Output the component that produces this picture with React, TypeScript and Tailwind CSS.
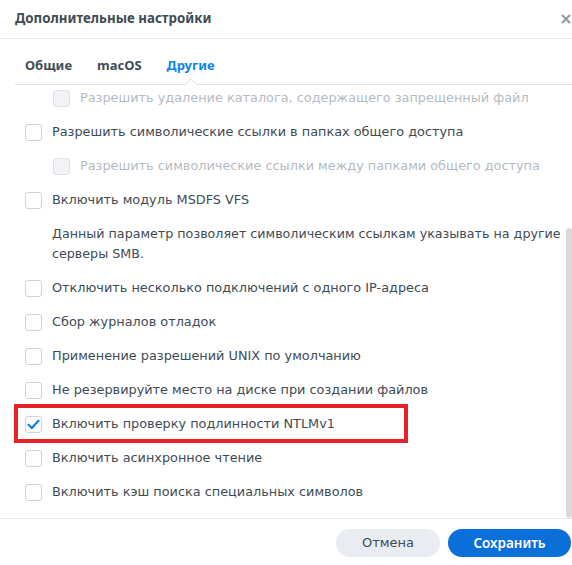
import React from "react";

type Row = {
  label: string;
  indent?: boolean;
  disabled?: boolean;
  checked?: boolean;
};

const rowsTop: Row[] = [
  { label: "Разрешить удаление каталога, содержащего запрещенный файл", indent: true, disabled: true },
  { label: "Разрешить символические ссылки в папках общего доступа" },
  { label: "Разрешить символические ссылки между папками общего доступа", indent: true, disabled: true },
  { label: "Включить модуль MSDFS VFS" },
];

const rowsBottom: Row[] = [
  { label: "Отключить несколько подключений с одного IP-адреса" },
  { label: "Сбор журналов отладок" },
  { label: "Применение разрешений UNIX по умолчанию" },
  { label: "Не резервируйте место на диске при создании файлов" },
  { label: "Включить проверку подлинности NTLMv1", checked: true },
  { label: "Включить асинхронное чтение" },
  { label: "Включить кэш поиска специальных символов" },
];

const boldFont = { fontFamily: '"Noto Sans", "Open Sans", sans-serif' };

function Checkbox({ disabled, checked }: { disabled?: boolean; checked?: boolean }) {
  return (
    <span
      className={
        disabled
          ? "flex h-[17px] w-[17px] shrink-0 items-center justify-center rounded-[3px] border border-[#dde2e8] bg-[#f1f3f6]"
          : "flex h-[17px] w-[17px] shrink-0 items-center justify-center rounded-[3px] border border-[#cbd3dc] bg-white"
      }
    >
      {checked && (
        <svg width="13" height="11" viewBox="0 0 13 11" fill="none">
          <path d="M1.5 5.8 L4.8 9 L11.5 1.8" stroke="#0a7fe6" strokeWidth="2.2" strokeLinecap="round" strokeLinejoin="round" />
        </svg>
      )}
    </span>
  );
}

function OptionRow({ row }: { row: Row }) {
  return (
    <div className={`flex h-[34px] items-center ${row.indent ? "pl-[53px]" : "pl-[25px]"}`}>
      <Checkbox disabled={row.disabled} checked={row.checked} />
      <span
        className={`ml-[10px] whitespace-nowrap text-[12.85px] ${row.disabled ? "text-[#b4bbc3]" : "text-[#414b55]"}`}
      >
        {row.label}
      </span>
    </div>
  );
}

export default function App() {
  return (
    <div
      className="relative flex h-[565px] w-[572px] flex-col overflow-hidden bg-white"
      style={{ fontFamily: '"DejaVu Sans", Verdana, sans-serif' }}
    >
      {/* header */}
      <div className="flex h-[39px] shrink-0 items-center justify-between border-b border-[#e5e9ee] pl-[15px] pr-[1px]">
        <span className="text-[13.3px] font-bold text-[#414b55]" style={boldFont}>
          Дополнительные настройки
        </span>
        <svg width="10" height="10" viewBox="0 0 10 10">
          <path d="M1 1 L9 9 M9 1 L1 9" stroke="#8f98a1" strokeWidth="2" />
        </svg>
      </div>

      {/* tabs */}
      <div
        className="ml-[15px] flex h-[46px] shrink-0 items-center gap-[25px] border-b border-[#dfe4ea] pl-[10px] pt-[8px]"
        style={boldFont}
      >
        <span className="text-[13px] font-bold text-[#414b55]">Общие</span>
        <span className="text-[13px] font-bold text-[#414b55]">macOS</span>
        <span className="relative text-[13px] font-bold text-[#0a86e6]">
          Другие
          <span className="absolute left-1/2 top-[24px] h-[9px] w-[9px] -translate-x-1/2 rotate-45 border-l border-t border-[#dfe4ea] bg-white" />
        </span>
      </div>

      {/* scrolled content */}
      <div className="relative flex-1 overflow-hidden">
        <div className="-mt-[4px]">
          {rowsTop.map((r) => (
            <OptionRow key={r.label} row={r} />
          ))}
          <div className="whitespace-nowrap py-[7px] pl-[52px] text-[12.7px] leading-[20px] text-[#414b55]">
            <div>Данный параметр позволяет символическим ссылкам указывать на другие</div>
            <div>серверы SMB.</div>
          </div>
          {rowsBottom.map((r) => (
            <OptionRow key={r.label} row={r} />
          ))}
        </div>
        <div className="absolute right-0 top-[143px] h-[290px] w-[6px] rounded-[3px] bg-[#dadada]" />
      </div>

      {/* footer */}
      <div className="flex h-[47px] shrink-0 items-start justify-end gap-[8px] border-t border-[#e5e9ee] pt-[10px] pr-[1px]">
        <button className="h-[28px] w-[104px] rounded-full bg-[#e9edf2] text-[13px] text-[#414b55]">Отмена</button>
        <button className="h-[28px] w-[123px] rounded-full bg-[#0b6fd9] text-[13.5px] font-semibold text-white" style={boldFont}>
          Сохранить
        </button>
      </div>

      {/* annotation */}
      <div className="pointer-events-none absolute left-[14px] top-[404px] h-[39px] w-[394px] border-[4px] border-[#e8202a]" />
    </div>
  );
}
